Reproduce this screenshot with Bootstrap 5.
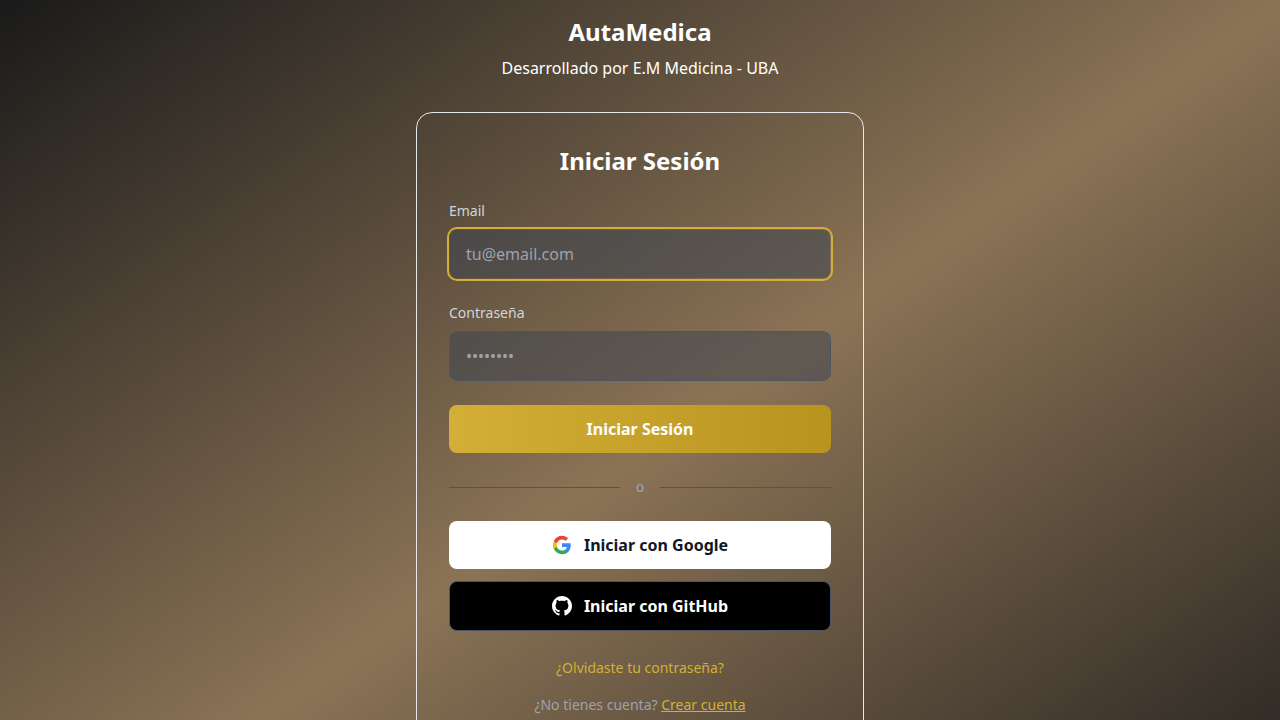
<!DOCTYPE html>
<html lang="es">
<head>
<meta charset="utf-8">
<meta name="viewport" content="width=device-width, initial-scale=1">
<title>AutaMedica - Iniciar Sesión</title>
<link href="https://cdn.jsdelivr.net/npm/bootstrap@5.3.0/dist/css/bootstrap.min.css" rel="stylesheet">
<style>
  :root { --gold: #d4af37; --gold-dark: #b8941f; --slate: #4b5563; --muted: #9ca3af; }
  body {
    font-family: "Noto Sans", sans-serif;
    min-height: 126vh;
    color: #fff;
    background: linear-gradient(145deg, #1a1a1a 0%, #8b7355 50%, #1a1a1a 100%);
  }
  .heading { font-size: 24px; line-height: 32px; font-weight: 700; }
  .login-panel { max-width: 448px; border: 1px solid #e5e7eb; border-radius: 16px; padding: 32px; }
  .text-14 { font-size: 14px; line-height: 20px; }
  .form-label { color: #d1d5db; }
  .form-control, .form-control:focus {
    padding: 12px 16px;
    line-height: 24px;
    border: 1px solid var(--slate);
    border-radius: 8px;
    color: #fff;
    background-color: rgba(55, 65, 81, .5);
  }
  .form-control:focus { border-color: transparent; box-shadow: 0 0 0 2px var(--gold); }
  .form-control::placeholder { color: var(--muted); }
  .btn { padding: 12px 16px; line-height: 24px; border-radius: 8px; font-weight: 700; }
  .btn-gold, .btn-gold:hover { border: 0; color: #fff; background: linear-gradient(to right, var(--gold), var(--gold-dark)); }
  .btn-google, .btn-google:hover { border: 0; color: #111827; background: #fff; }
  .btn-github, .btn-github:hover { border: 1px solid var(--slate); color: #fff; background: #000; }
  .provider-gap { gap: 12px; }
  .rule { height: 1px; background: var(--slate); }
  .text-soft { color: var(--muted); }
  .link-gold { color: var(--gold); }
</style>
</head>
<body>
<header class="text-center pt-3 pb-3">
  <h1 class="heading mb-2">AutaMedica</h1>
  <p class="mb-0">Desarrollado por E.M Medicina - UBA</p>
</header>
<main class="d-flex justify-content-center pt-3 pb-5">
  <section class="login-panel w-100">
    <h2 class="heading text-center mb-4">Iniciar Sesión</h2>
    <form>
      <div class="mb-4">
        <label for="email" class="form-label text-14 d-block mb-2">Email</label>
        <input type="email" id="email" class="form-control" placeholder="tu@email.com" autofocus>
      </div>
      <div class="mb-4">
        <label for="password" class="form-label text-14 d-block mb-2">Contraseña</label>
        <input type="password" id="password" class="form-control" placeholder="••••••••">
      </div>
      <button type="submit" class="btn btn-gold w-100">Iniciar Sesión</button>
    </form>
    <div class="d-flex align-items-center my-4">
      <div class="rule flex-fill"></div>
      <span class="text-14 text-soft px-3">o</span>
      <div class="rule flex-fill"></div>
    </div>
    <div class="d-grid provider-gap mb-4">
      <button type="button" class="btn btn-google d-flex align-items-center justify-content-center provider-gap">
        <svg width="20" height="20" viewBox="0 0 24 24" aria-hidden="true">
          <path fill="#4285F4" d="M22.56 12.25c0-.78-.07-1.53-.2-2.25H12v4.26h5.92c-.26 1.37-1.04 2.53-2.21 3.31v2.77h3.57c2.08-1.92 3.28-4.74 3.28-8.09z"/>
          <path fill="#34A853" d="M12 23c2.97 0 5.46-.98 7.28-2.66l-3.57-2.77c-.98.66-2.23 1.06-3.71 1.06-2.86 0-5.29-1.93-6.16-4.53H2.18v2.84C3.99 20.53 7.7 23 12 23z"/>
          <path fill="#FBBC05" d="M5.84 14.09c-.22-.66-.35-1.36-.35-2.09s.13-1.43.35-2.09V7.07H2.18C1.43 8.55 1 10.22 1 12s.43 3.45 1.18 4.93l2.85-2.22.81-.62z"/>
          <path fill="#EA4335" d="M12 5.38c1.62 0 3.06.56 4.21 1.64l3.15-3.15C17.45 2.09 14.97 1 12 1 7.7 1 3.99 3.47 2.18 7.07l3.66 2.84c.87-2.6 3.3-4.53 6.16-4.53z"/>
        </svg>
        Iniciar con Google
      </button>
      <button type="button" class="btn btn-github d-flex align-items-center justify-content-center provider-gap">
        <svg width="20" height="20" viewBox="0 0 24 24" fill="currentColor" aria-hidden="true">
          <path d="M12 0c-6.626 0-12 5.373-12 12 0 5.302 3.438 9.8 8.207 11.387.599.111.793-.261.793-.577v-2.234c-3.338.726-4.033-1.416-4.033-1.416-.546-1.387-1.333-1.756-1.333-1.756-1.089-.745.083-.729.083-.729 1.205.084 1.839 1.237 1.839 1.237 1.07 1.834 2.807 1.304 3.492.997.107-.775.418-1.305.762-1.604-2.665-.305-5.467-1.334-5.467-5.931 0-1.311.469-2.381 1.236-3.221-.124-.303-.535-1.524.117-3.176 0 0 1.008-.322 3.301 1.23.957-.266 1.983-.399 3.003-.404 1.02.005 2.047.138 3.006.404 2.291-1.552 3.297-1.23 3.297-1.23.653 1.653.242 2.874.118 3.176.77.84 1.235 1.911 1.235 3.221 0 4.609-2.807 5.624-5.479 5.921.43.372.823 1.102.823 2.222v3.293c0 .319.192.694.801.576 4.765-1.589 8.199-6.086 8.199-11.386 0-6.627-5.373-12-12-12z"/>
        </svg>
        Iniciar con GitHub
      </button>
    </div>
    <div class="text-center">
      <div class="mb-3"><a href="#" class="text-14 link-gold text-decoration-none">¿Olvidaste tu contraseña?</a></div>
      <p class="text-14 text-soft mb-0">¿No tienes cuenta? <a href="#" class="link-gold">Crear cuenta</a></p>
    </div>
  </section>
</main>
<script src="https://cdn.jsdelivr.net/npm/bootstrap@5.3.0/dist/js/bootstrap.bundle.min.js"></script>
</body>
</html>
